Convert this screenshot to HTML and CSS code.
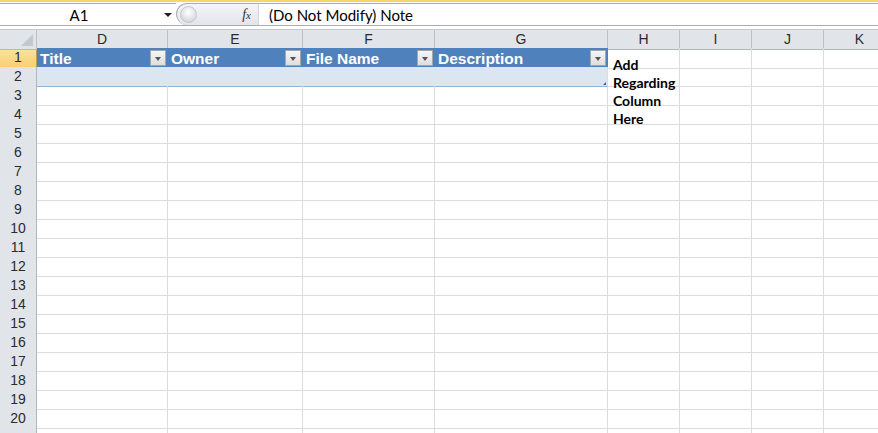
FILE: index.html
```html
<!DOCTYPE html>
<html>
<head>
    <title>Book1 - Sheet</title>
    <link rel="stylesheet" href="styles.css">
</head>
<body>
    <!-- formula bar -->
    <div class="formula_bar">
        <div class="name_box">
            <span class="cell_ref">A1</span>
            <span class="drop_arrow"></span>
        </div>
        <div class="fx_zone">
            <span class="knob"></span>
            <span class="fx"><i>f</i><small>x</small></span>
        </div>
        <div class="formula_input">(Do Not Modify) Note</div>
    </div>

    <div class="sheet">
        <!-- column headers -->
        <div class="row col_heads">
            <div class="corner"><span class="corner_tri"></span></div>
            <div class="ch">D</div>
            <div class="ch">E</div>
            <div class="ch">F</div>
            <div class="ch">G</div>
            <div class="ch">H</div>
            <div class="ch">I</div>
            <div class="ch">J</div>
            <div class="ch">K</div>
        </div>

        <!-- table header -->
        <div class="row">
            <div class="rh selected">1</div>
            <div class="th"><span>Title</span><span class="filter"></span></div>
            <div class="th"><span>Owner</span><span class="filter"></span></div>
            <div class="th"><span>File Name</span><span class="filter"></span></div>
            <div class="th"><span>Description</span><span class="filter"></span></div>
            <div class="c"></div><div class="c"></div><div class="c"></div><div class="c"></div>
        </div>

        <!-- table body -->
        <div class="row">
            <div class="rh">2</div>
            <div class="tb"></div><div class="tb"></div><div class="tb"></div>
            <div class="tb last"><span class="resize"></span></div>
            <div class="c"></div><div class="c"></div><div class="c"></div><div class="c"></div>
        </div>

        <div class="row"><div class="rh">3</div><div class="c"></div><div class="c"></div><div class="c"></div><div class="c"></div><div class="c"></div><div class="c"></div><div class="c"></div><div class="c"></div></div>
        <div class="row"><div class="rh">4</div><div class="c"></div><div class="c"></div><div class="c"></div><div class="c"></div><div class="c"></div><div class="c"></div><div class="c"></div><div class="c"></div></div>
        <div class="row"><div class="rh">5</div><div class="c"></div><div class="c"></div><div class="c"></div><div class="c"></div><div class="c"></div><div class="c"></div><div class="c"></div><div class="c"></div></div>
        <div class="row"><div class="rh">6</div><div class="c"></div><div class="c"></div><div class="c"></div><div class="c"></div><div class="c"></div><div class="c"></div><div class="c"></div><div class="c"></div></div>
        <div class="row"><div class="rh">7</div><div class="c"></div><div class="c"></div><div class="c"></div><div class="c"></div><div class="c"></div><div class="c"></div><div class="c"></div><div class="c"></div></div>
        <div class="row"><div class="rh">8</div><div class="c"></div><div class="c"></div><div class="c"></div><div class="c"></div><div class="c"></div><div class="c"></div><div class="c"></div><div class="c"></div></div>
        <div class="row"><div class="rh">9</div><div class="c"></div><div class="c"></div><div class="c"></div><div class="c"></div><div class="c"></div><div class="c"></div><div class="c"></div><div class="c"></div></div>
        <div class="row"><div class="rh">10</div><div class="c"></div><div class="c"></div><div class="c"></div><div class="c"></div><div class="c"></div><div class="c"></div><div class="c"></div><div class="c"></div></div>
        <div class="row"><div class="rh">11</div><div class="c"></div><div class="c"></div><div class="c"></div><div class="c"></div><div class="c"></div><div class="c"></div><div class="c"></div><div class="c"></div></div>
        <div class="row"><div class="rh">12</div><div class="c"></div><div class="c"></div><div class="c"></div><div class="c"></div><div class="c"></div><div class="c"></div><div class="c"></div><div class="c"></div></div>
        <div class="row"><div class="rh">13</div><div class="c"></div><div class="c"></div><div class="c"></div><div class="c"></div><div class="c"></div><div class="c"></div><div class="c"></div><div class="c"></div></div>
        <div class="row"><div class="rh">14</div><div class="c"></div><div class="c"></div><div class="c"></div><div class="c"></div><div class="c"></div><div class="c"></div><div class="c"></div><div class="c"></div></div>
        <div class="row"><div class="rh">15</div><div class="c"></div><div class="c"></div><div class="c"></div><div class="c"></div><div class="c"></div><div class="c"></div><div class="c"></div><div class="c"></div></div>
        <div class="row"><div class="rh">16</div><div class="c"></div><div class="c"></div><div class="c"></div><div class="c"></div><div class="c"></div><div class="c"></div><div class="c"></div><div class="c"></div></div>
        <div class="row"><div class="rh">17</div><div class="c"></div><div class="c"></div><div class="c"></div><div class="c"></div><div class="c"></div><div class="c"></div><div class="c"></div><div class="c"></div></div>
        <div class="row"><div class="rh">18</div><div class="c"></div><div class="c"></div><div class="c"></div><div class="c"></div><div class="c"></div><div class="c"></div><div class="c"></div><div class="c"></div></div>
        <div class="row"><div class="rh">19</div><div class="c"></div><div class="c"></div><div class="c"></div><div class="c"></div><div class="c"></div><div class="c"></div><div class="c"></div><div class="c"></div></div>
        <div class="row"><div class="rh">20</div><div class="c"></div><div class="c"></div><div class="c"></div><div class="c"></div><div class="c"></div><div class="c"></div><div class="c"></div><div class="c"></div></div>
        <!-- last row only peeks in at the bottom edge -->
        <div class="row"><div class="rh"></div><div class="c"></div><div class="c"></div><div class="c"></div><div class="c"></div><div class="c"></div><div class="c"></div><div class="c"></div><div class="c"></div></div>

        <!-- wrapped text of H1 spills over the rows below -->
        <div class="note">Add<br>Regarding<br>Column<br>Here</div>
    </div>
</body>
</html>
```

FILE: styles.css
```css
body {
    margin: 0;
    width: 878px;
    height: 433px;
    overflow: hidden;
    background-color: white;
    font-family: "Liberation Sans", Arial, sans-serif;
}

/* formula bar */
.formula_bar {
    display: flex;
    height: 22px;
    border-top: 2px solid #f1d86b;
    padding-top: 1px;
    border-bottom: 1px solid #a9adb3;
    margin-bottom: 3px;
}

.formula_bar > div {
    border-top: 1px solid #a9adb3;
}

.name_box {
    width: 176px;
    display: flex;
    align-items: center;
    padding-top: 1px;
    box-sizing: border-box;
    background-color: white;
}

.cell_ref {
    width: 158px;
    text-align: center;
    font-family: Lato, sans-serif;
    font-size: 15px;
    color: black;
}

.drop_arrow {
    margin-left: 6px;
    width: 0;
    height: 0;
    border-left: 4px solid transparent;
    border-right: 4px solid transparent;
    border-top: 4px solid #222;
}

.fx_zone {
    width: 82px;
    display: flex;
    align-items: center;
    justify-content: space-between;
    background: linear-gradient(#f4f5f7, #e2e5ea);
    border-left: 1px solid #a9adb3;
    border-radius: 11px 0 0 11px;
    box-sizing: border-box;
    padding: 0 7px 0 3px;
}

.knob {
    width: 15px;
    height: 15px;
    border-radius: 50%;
    background: radial-gradient(circle at 50% 35%, #ffffff, #c8ccd2);
    border: 1px solid #c2c6cc;
}

.fx {
    font-family: "Liberation Serif", serif;
    font-size: 14px;
    color: #333;
}

.fx small {
    font-style: italic;
    font-size: 11px;
}

.formula_input {
    flex: 1;
    background-color: white;
    border-left: 1px solid #d0d3d8;
    padding-left: 10px;
    padding-top: 1px;
    font-family: Lato, sans-serif;
    font-size: 15px;
    line-height: 21px;
    color: black;
}

/* sheet grid */
.sheet {
    position: relative;
}

.row {
    display: grid;
    grid-template-columns: 37px 131px 135px 132px 173px 72px 72px 72px 72px;
    height: 19px;
}

.row > div {
    box-sizing: border-box;
    border-right: 1px solid #dadcdd;
    border-bottom: 1px solid #dadcdd;
}

.col_heads {
    border-top: 1px solid #c6cacf;
    height: 19px;
    box-sizing: border-box;
}

.col_heads > div {
    background-color: #e1e5ea;
    border-right-color: #bcc1c8;
    border-bottom-color: #b3b8bf;
}

.ch {
    text-align: center;
    font-size: 14px;
    line-height: 19px;
    color: #2b2b2b;
}

.corner {
    position: relative;
}

.corner_tri {
    position: absolute;
    right: 3px;
    bottom: 3px;
    width: 0;
    height: 0;
    border-left: 12px solid transparent;
    border-bottom: 12px solid #c3c8ce;
}

.rh {
    background-color: #e1e5ea;
    text-align: center;
    font-size: 14px;
    line-height: 19px;
    color: #2b2b2b;
    border-right-color: #b1b6bd !important;
    border-bottom-color: #c6cacf !important;
}

.rh.selected {
    background: linear-gradient(#fbe3a6, #f7cf6c);
    border-bottom-color: #e6a23a !important;
    border-right-color: #c79a4d !important;
}

/* excel table */
.th {
    display: flex;
    align-items: center;
    justify-content: space-between;
    background-color: #4f81bd;
    border-right-color: #4f81bd !important;
    border-bottom-color: #4f81bd !important;
    padding-left: 3px;
    padding-right: 1px;
    color: white;
    font-weight: bold;
    font-size: 15.5px;
}

.th > span:first-child {
    padding-top: 2px;
}

.filter {
    width: 16px;
    height: 16px;
    box-sizing: border-box;
    border: 1px solid #a3a6aa;
    background: linear-gradient(#f6f6f6, #dedede);
    position: relative;
}

.filter::after {
    content: "";
    position: absolute;
    left: 4px;
    top: 6px;
    border-left: 3.5px solid transparent;
    border-right: 3.5px solid transparent;
    border-top: 4px solid #555;
}

.tb {
    background-color: #dce6f1;
    border-right-color: #dce6f1 !important;
    border-bottom-color: #95b3d7 !important;
}

.tb.last {
    position: relative;
    border-right-color: #dadcdd !important;
}

.resize {
    position: absolute;
    right: 1px;
    bottom: 1px;
    width: 0;
    height: 0;
    border-left: 3px solid transparent;
    border-bottom: 3px solid #3c5fa8;
}

.note {
    position: absolute;
    left: 613px;
    top: 27px;
    font-family: Lato, sans-serif;
    font-weight: bold;
    font-size: 14px;
    line-height: 18px;
    color: black;
}
```
